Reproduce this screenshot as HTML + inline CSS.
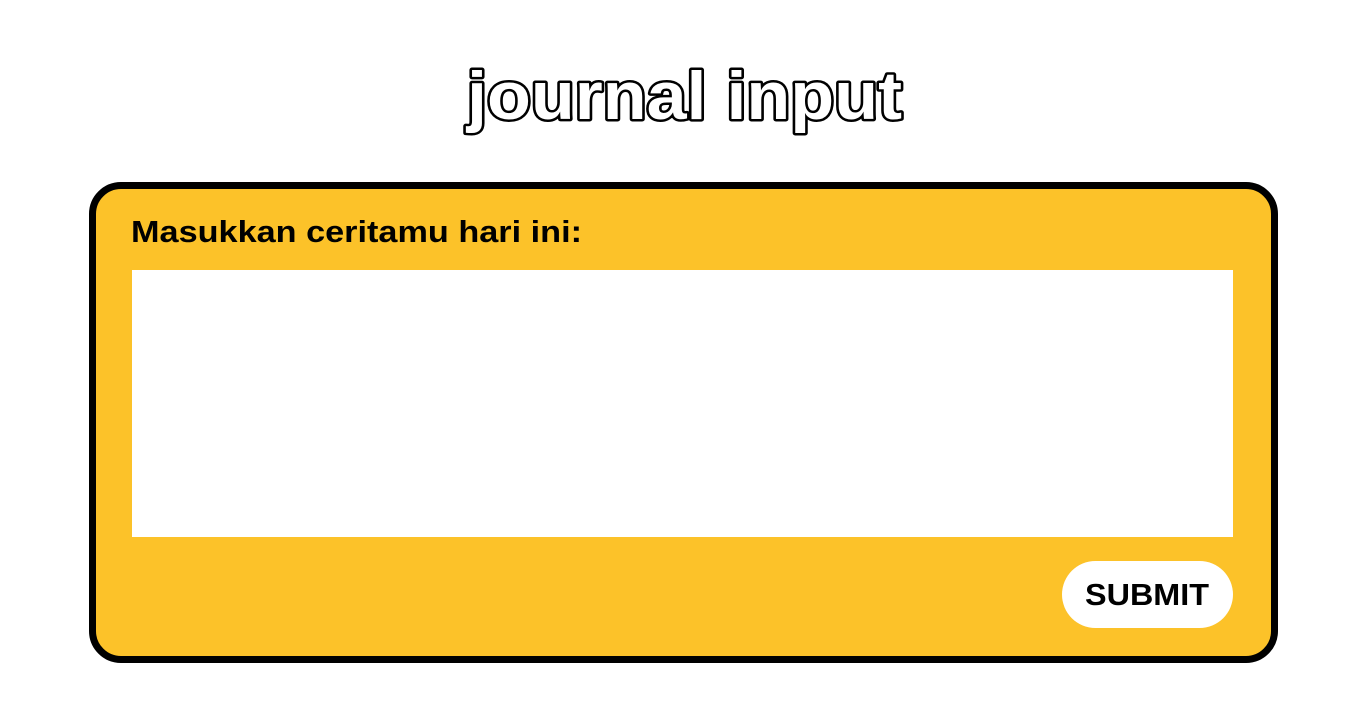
<!DOCTYPE html>
<html><head><style>
html,body{margin:0;padding:0;background:#fff;width:1366px;height:720px;overflow:hidden}
.box{position:absolute;left:89px;top:182px;width:1175px;height:467px;border:7px solid #000;border-radius:32px;background:#fcc229}
.ta{position:absolute;left:132px;top:270px;width:1101px;height:267px;background:#fff}
.btn{position:absolute;left:1062px;top:561px;width:171px;height:67px;border-radius:34px;background:#fff}
svg{position:absolute;left:0;top:0}
</style></head><body>
<div class="box"></div>
<div class="ta"></div>
<div class="btn"></div>
<svg width="1366" height="720">
<text x="467" y="119" textLength="435" lengthAdjust="spacingAndGlyphs" font-family="Liberation Sans, sans-serif" font-weight="bold" font-size="68" fill="#fff" stroke="#000" stroke-width="5" stroke-linejoin="round" paint-order="stroke">journal input</text>
<text x="131" y="242" textLength="451" lengthAdjust="spacingAndGlyphs" font-family="Liberation Sans, sans-serif" font-weight="bold" font-size="31" fill="#000">Masukkan ceritamu hari ini:</text>
<text x="1085" y="605" textLength="124" lengthAdjust="spacingAndGlyphs" font-family="Liberation Sans, sans-serif" font-weight="bold" font-size="31" fill="#000">SUBMIT</text>
</svg>
</body></html>
